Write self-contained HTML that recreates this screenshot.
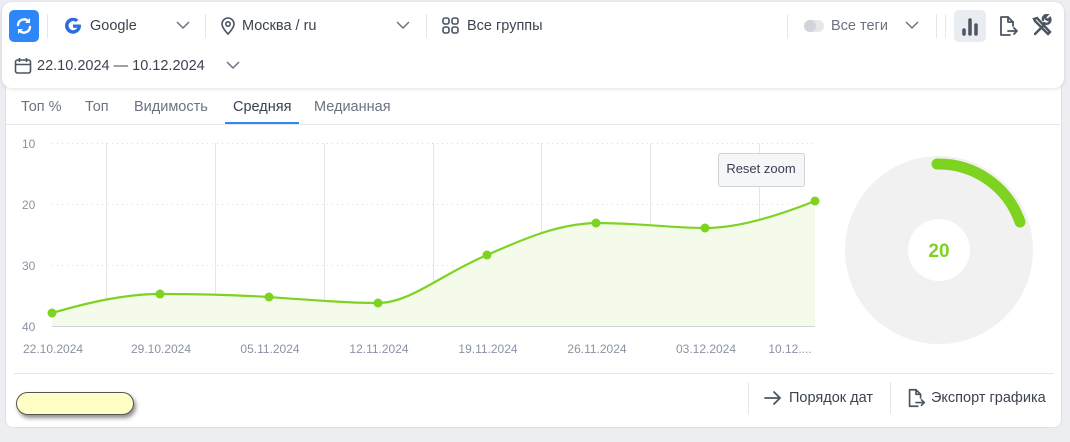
<!DOCTYPE html>
<html><head><meta charset="utf-8"><style>
*{box-sizing:border-box;margin:0;padding:0}
body{width:1070px;height:442px;background:#eceef2;font-family:"Liberation Sans",sans-serif;position:relative;overflow:hidden;color:#3c4350}
.abs{position:absolute}
.t{font-size:14.5px;color:#3c4350;white-space:nowrap}
.sep{position:absolute;width:1px;background:#e3e6eb}
</style></head><body>
<div class="abs" style="left:5px;top:80px;width:1057px;height:348px;background:#fff;border:1px solid #dde1e7;border-radius:8px"></div>
<div class="abs" style="left:2px;top:2px;width:1062px;height:86px;background:#fff;border-radius:10px;box-shadow:0 1px 4px rgba(0,0,0,.12)"></div>
<!-- top bar -->
<div class="abs" style="left:9px;top:10px;width:30px;height:32px;background:#2f86f6;border-radius:5px"></div>
<svg class="abs" style="left:9px;top:10px" width="30" height="32" viewBox="0 0 30 32"><g fill="none" stroke="#fff" stroke-width="2.4" stroke-linecap="round"><path d="M9 15a6 6 0 0 1 10.5-3.5"/><path d="M21 17a6 6 0 0 1-10.5 3.5"/></g><path d="M21 8v5h-5z" fill="#fff"/><path d="M9 24v-5h5z" fill="#fff"/></svg>
<div class="sep" style="left:47px;top:14px;height:24px"></div>
<svg class="abs" style="left:64px;top:17px" width="18" height="18" viewBox="0 0 18 18"><path d="M16.5 7.5H9v3.2h4.3A4.6 4.6 0 1 1 12 5l2.3-2.3A8 8 0 1 0 17 9c0-.5 0-1-.5-1.5z" fill="#2f6be0"/></svg>
<div class="abs t" style="left:90px;top:18px">Google</div>
<svg class="abs" style="left:175px;top:20px" width="16" height="10"><path d="M2 2l6 6 6-6" fill="none" stroke="#6b7280" stroke-width="1.5"/></svg>
<div class="sep" style="left:205px;top:14px;height:24px"></div>
<svg class="abs" style="left:220px;top:16px" width="16" height="20" viewBox="0 0 16 20"><path d="M8 18s-6-6-6-10a6 6 0 0 1 12 0c0 4-6 10-6 10z" fill="none" stroke="#4b5563" stroke-width="1.6"/><circle cx="8" cy="8" r="2.2" fill="none" stroke="#4b5563" stroke-width="1.6"/></svg>
<div class="abs t" style="left:242px;top:18px">Москва / ru</div>
<svg class="abs" style="left:395px;top:20px" width="16" height="10"><path d="M2 2l6 6 6-6" fill="none" stroke="#6b7280" stroke-width="1.5"/></svg>
<div class="sep" style="left:426px;top:14px;height:24px"></div>
<svg class="abs" style="left:442px;top:17px" width="18" height="18"><g fill="none" stroke="#4b5563" stroke-width="1.6"><rect x="1" y="1" width="6" height="6" rx="2"/><rect x="10" y="1" width="6" height="6" rx="2"/><rect x="1" y="10" width="6" height="6" rx="2"/><rect x="10" y="10" width="6" height="6" rx="2"/></g></svg>
<div class="abs t" style="left:467px;top:18px">Все группы</div>
<div class="sep" style="left:787px;top:14px;height:24px"></div>
<div class="abs" style="left:804px;top:20px;width:20px;height:12px;border-radius:6px;background:#e5e7eb"></div>
<div class="abs" style="left:804px;top:20px;width:12px;height:12px;border-radius:6px;background:#d1d5db"></div>
<div class="abs t" style="left:831px;top:18px;color:#6b7280">Все теги</div>
<svg class="abs" style="left:904px;top:20px" width="16" height="10"><path d="M2 2l6 6 6-6" fill="none" stroke="#6b7280" stroke-width="1.5"/></svg>
<div class="sep" style="left:936px;top:14px;height:24px"></div>
<div class="sep" style="left:945px;top:14px;height:24px"></div>
<div class="abs" style="left:954px;top:10px;width:32px;height:32px;background:#e9ecf1;border-radius:5px"></div>
<svg class="abs" style="left:954px;top:10px" width="32" height="32"><g stroke="#4b5563" stroke-width="3.5" stroke-linecap="round"><path d="M10 20v4M16 10v14M22 15v9"/></g></svg>
<svg class="abs" style="left:996px;top:14px" width="24" height="24" viewBox="0 0 24 24"><g fill="none" stroke="#4b5563" stroke-width="1.8" stroke-linejoin="round" stroke-linecap="round"><path d="M14 21H5V3h7l5 5v4"/><path d="M12 3v5h5"/><path d="M12 17h9M18 14l3 3-3 3"/></g></svg>
<svg class="abs" style="left:1030px;top:14px" width="24" height="24" viewBox="0 0 24 24"><g fill="none" stroke="#4b5563" stroke-width="2.4" stroke-linecap="round"><path d="M4 5l3-1 13 14-2 2L5 7z"/><path d="M5 20l9-9"/><path d="M14 9a4 4 0 0 0 6-5l-2 2-2-1-1-2 2-2a4 4 0 0 0-4 5"/></g></svg>
<svg class="abs" style="left:14px;top:57px" width="18" height="18" viewBox="0 0 18 18"><g fill="none" stroke="#4b5563" stroke-width="1.6"><rect x="1.5" y="3" width="15" height="13" rx="2"/><path d="M1.5 7.5h15M5.5 1v4M12.5 1v4"/></g></svg>
<div class="abs t" style="left:37px;top:58px">22.10.2024 — 10.12.2024</div>
<svg class="abs" style="left:225px;top:60px" width="16" height="10"><path d="M2 2l6 6 6-6" fill="none" stroke="#6b7280" stroke-width="1.5"/></svg>
<!-- tabs -->
<div class="abs t" style="left:21px;top:99px;color:#6b7280">Топ %</div>
<div class="abs t" style="left:85px;top:99px;color:#6b7280">Топ</div>
<div class="abs t" style="left:134px;top:99px;color:#6b7280">Видимость</div>
<div class="abs t" style="left:233px;top:99px;color:#374151">Средняя</div>
<div class="abs t" style="left:314px;top:99px;color:#6b7280">Медианная</div>
<div class="abs" style="left:225px;top:122px;width:74px;height:2px;background:#2f86f6"></div>
<div class="abs" style="left:6px;top:124px;width:1055px;height:1px;background:#e5e7eb"></div>
<!-- chart -->
<svg class="abs" style="left:0;top:0" width="1070" height="442">
<g stroke="#d9dde2" stroke-width="1" stroke-dasharray="1 4"><path d="M52 143.5H815M52 204.5H815M52 265.5H815"/></g>
<g stroke="#e3e6ea" stroke-width="1"><path d="M106.5 143V326M215.5 143V326M324.5 143V326M433.5 143V326M541.5 143V326M650.5 143V326M759.5 143V326"/></g>
<path d="M52 313C90 302 125 294 160 294C200 294 235 295 269 297C310 300 350 303 378 303C410 303 440 275 487 255C530 236 560 224 596 223C640 223 670 228 705 228C740 228 780 215 815 201V326H52Z" fill="#f4fbea"/>
<path d="M52 326.5H815" stroke="#d1d5db"/>
<path d="M52 313C90 302 125 294 160 294C200 294 235 295 269 297C310 300 350 303 378 303C410 303 440 275 487 255C530 236 560 224 596 223C640 223 670 228 705 228C740 228 780 215 815 201" fill="none" stroke="#7ed321" stroke-width="2.2"/>
<g fill="#7ed321"><circle cx="52" cy="313" r="4.5"/><circle cx="160" cy="294" r="4.5"/><circle cx="269" cy="297" r="4.5"/><circle cx="378" cy="303" r="4.5"/><circle cx="487" cy="255" r="4.5"/><circle cx="596" cy="223" r="4.5"/><circle cx="705" cy="228" r="4.5"/><circle cx="815" cy="201" r="4.5"/></g>
<g font-family="Liberation Sans" font-size="12" fill="#8a93a3"><text x="22" y="148">10</text><text x="22" y="209">20</text><text x="22" y="270">30</text><text x="22" y="331">40</text>
<g text-anchor="middle"><text x="53" y="353">22.10.2024</text><text x="161" y="353">29.10.2024</text><text x="270" y="353">05.11.2024</text><text x="379" y="353">12.11.2024</text><text x="488" y="353">19.11.2024</text><text x="597" y="353">26.11.2024</text><text x="706" y="353">03.12.2024</text><text x="790" y="353">10.12....</text></g></g>
<rect x="718.5" y="153.5" width="86" height="33" rx="2" fill="#f5f6f8" stroke="#cfd4da"/>
<text x="761" y="173" font-family="Liberation Sans" font-size="13" fill="#374151" text-anchor="middle">Reset zoom</text>
<circle cx="939" cy="250" r="94" fill="#f1f1f1"/>
<circle cx="939" cy="250" r="31" fill="#fff"/>
<path d="M937 164A86 86 0 0 1 1020 222" fill="none" stroke="#7ed321" stroke-width="11" stroke-linecap="round"/>
<text x="939" y="257" font-family="Liberation Sans" font-size="19" font-weight="bold" fill="#7ed321" text-anchor="middle">20</text>
</svg>
<!-- footer -->
<div class="abs" style="left:14px;top:373px;width:1040px;height:1px;background:#e5e7eb"></div>
<div class="abs" style="left:16px;top:392px;width:118px;height:23px;background:#ffffc4;border:1px solid #555;border-radius:12px;box-shadow:2px 3px 4px rgba(0,0,0,.45)"></div>
<div class="sep" style="left:748px;top:382px;height:32px"></div>
<svg class="abs" style="left:763px;top:389px" width="20" height="18"><path d="M2 9h15M11 3l6 6-6 6" fill="none" stroke="#4b5563" stroke-width="1.8" stroke-linecap="round" stroke-linejoin="round"/></svg>
<div class="abs t" style="left:789px;top:390px">Порядок дат</div>
<div class="sep" style="left:890px;top:382px;height:32px"></div>
<svg class="abs" style="left:905px;top:386px" width="22" height="24" viewBox="0 0 24 24"><g fill="none" stroke="#4b5563" stroke-width="1.8" stroke-linejoin="round" stroke-linecap="round"><path d="M14 21H5V3h7l5 5v4"/><path d="M12 3v5h5"/><path d="M12 17h9M18 14l3 3-3 3"/></g></svg>
<div class="abs t" style="left:931px;top:390px">Экспорт графика</div>
</body></html>
